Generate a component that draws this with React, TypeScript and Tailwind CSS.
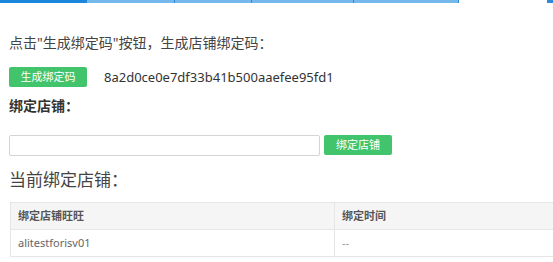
export default function App() {
  const font = { fontFamily: '"Noto Sans", "Noto Sans CJK SC", sans-serif' };

  return (
    <div className="w-[553px] h-[262px] overflow-hidden bg-white text-[#333]" style={font}>
      {/* top tab strip */}
      <div className="flex h-[3px]">
        <div className="w-[87px] bg-[#1b87dc]" />
        <div className="w-[88px] bg-[#74b8ec] border-r border-[#2c8ad6]" />
        <div className="w-[77px] bg-[#74b8ec] border-r border-[#2c8ad6]" />
        <div className="w-[102px] bg-[#74b8ec] border-r border-[#2c8ad6]" />
        <div className="w-[105px] bg-[#74b8ec] border-r border-[#2c8ad6]" />
        <div className="flex-1" />
        <div className="w-[6px] bg-[#2c8ad6]" />
      </div>

      <div className="px-[9px]">
        <p className="mt-[30px] text-[14px] leading-[20px] text-[#444]">
          点击"生成绑定码"按钮，生成店铺绑定码：
        </p>

        <div className="mt-[14px] flex items-center">
          <button className="h-[20px] w-[78px] rounded-[2px] bg-[#42c46c] text-[11px] leading-[20px] text-white">
            生成绑定码
          </button>
          <span className="ml-[17px] text-[13px] leading-[20px] text-[#333]">
            8a2d0ce0e7df33b41b500aaefee95fd1
          </span>
        </div>

        <h3 className="mt-[9px] text-[14px] font-bold leading-[20px] text-[#333]">绑定店铺：</h3>

        <div className="mt-[19px] flex items-start gap-[4px]">
          <input className="h-[21px] w-[311px] rounded-[2px] border border-[#d4d4d4] bg-white outline-none" />
          <button className="h-[20px] w-[68px] rounded-[2px] bg-[#42c46c] text-[11px] leading-[20px] text-white">
            绑定店铺
          </button>
        </div>

        <h2 className="mt-[12px] text-[17px] leading-[24px] text-[#444]">当前绑定店铺：</h2>

        <table className="mt-[10px] ml-px w-[580px] border-collapse text-[11px]">
          <thead>
            <tr className="h-[27px] bg-[#f5f5f5]">
              <th className="w-[324px] border border-[#e6e6e6] pl-[7px] text-left font-bold text-[#555]">绑定店铺旺旺</th>
              <th className="border border-[#e6e6e6] pl-[7px] text-left font-bold text-[#555]">绑定时间</th>
            </tr>
          </thead>
          <tbody>
            <tr className="h-[27px] bg-white">
              <td className="border border-[#e6e6e6] pl-[7px] text-[#666]">alitestforisv01</td>
              <td className="border border-[#e6e6e6] pl-[7px] text-[#999]">--</td>
            </tr>
          </tbody>
        </table>
      </div>
    </div>
  );
}
